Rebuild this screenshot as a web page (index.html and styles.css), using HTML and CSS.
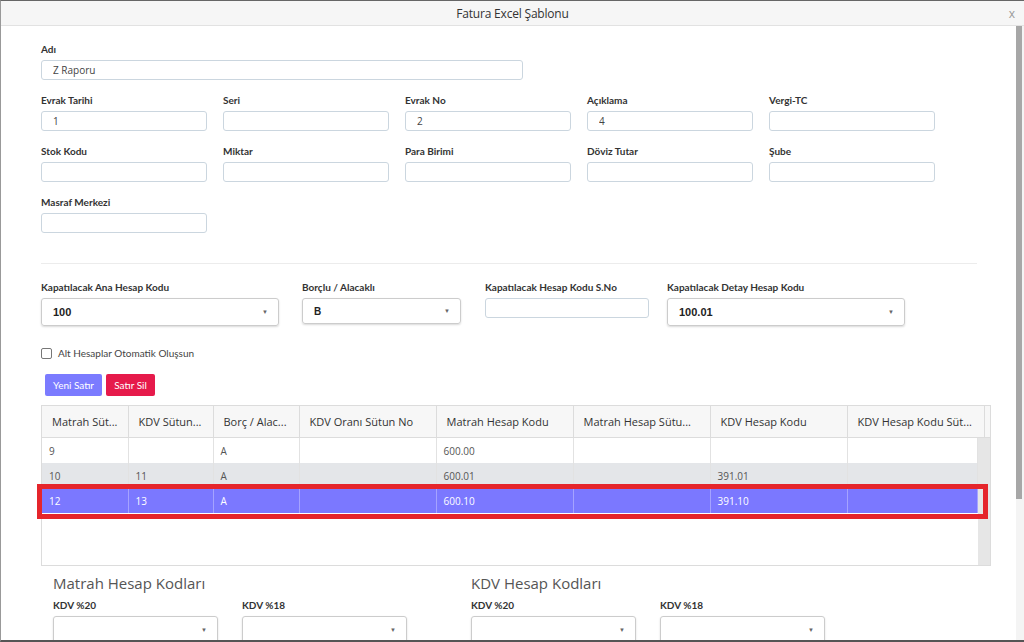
FILE: index.html
```html
<!DOCTYPE html>
<html lang="tr">
<head>
    <meta charset="UTF-8">
    <meta name="viewport" content="width=device-width, initial-scale=1.0">
    <title>Fatura Excel Şablonu</title>
    <link rel="stylesheet" href="styles.css">
</head>
<body>
    <div class="modal">
        <div class="modal-header">
            <span class="modal-title">Fatura Excel Şablonu</span>
            <span class="modal-close">x</span>
        </div>
        <div class="modal-main">
            <div class="modal-body">
                <div class="field wide">
                    <label>Adı</label>
                    <input class="text-input" type="text" value="Z Raporu">
                </div>

                <div class="form-row">
                    <div class="field"><label>Evrak Tarihi</label><input class="text-input" type="text" value="1"></div>
                    <div class="field"><label>Seri</label><input class="text-input" type="text"></div>
                    <div class="field"><label>Evrak No</label><input class="text-input" type="text" value="2"></div>
                    <div class="field"><label>Açıklama</label><input class="text-input" type="text" value="4"></div>
                    <div class="field"><label>Vergi-TC</label><input class="text-input" type="text"></div>
                </div>
                <div class="form-row">
                    <div class="field"><label>Stok Kodu</label><input class="text-input" type="text"></div>
                    <div class="field"><label>Miktar</label><input class="text-input" type="text"></div>
                    <div class="field"><label>Para Birimi</label><input class="text-input" type="text"></div>
                    <div class="field"><label>Döviz Tutar</label><input class="text-input" type="text"></div>
                    <div class="field"><label>Şube</label><input class="text-input" type="text"></div>
                </div>
                <div class="form-row">
                    <div class="field"><label>Masraf Merkezi</label><input class="text-input" type="text"></div>
                </div>

                <hr class="divider">

                <div class="account-row">
                    <div class="field select-main">
                        <label>Kapatılacak Ana Hesap Kodu</label>
                        <div class="select tall"><span>100</span><span class="caret">&#9660;</span></div>
                    </div>
                    <div class="field select-side">
                        <label>Borçlu / Alacaklı</label>
                        <div class="select"><span class="small">B</span><span class="caret">&#9660;</span></div>
                    </div>
                    <div class="field select-no">
                        <label>Kapatılacak Hesap Kodu S.No</label>
                        <input class="text-input" type="text">
                    </div>
                    <div class="field select-main">
                        <label>Kapatılacak Detay Hesap Kodu</label>
                        <div class="select tall"><span>100.01</span><span class="caret">&#9660;</span></div>
                    </div>
                </div>

                <div class="check-row">
                    <span class="checkbox"></span>
                    <span>Alt Hesaplar Otomatik Oluşsun</span>
                </div>

                <div class="buttons">
                    <button class="btn btn-new">Yeni Satır</button>
                    <button class="btn btn-delete">Satır Sil</button>
                </div>

                <div class="grid">
                    <div class="grid-head">
                        <table>
                            <colgroup>
                                <col style="width:86px"><col style="width:85px"><col style="width:86px">
                                <col style="width:137px"><col style="width:137px"><col style="width:137px">
                                <col style="width:137px"><col style="width:137px">
                            </colgroup>
                            <tr>
                                <th>Matrah Süt...</th>
                                <th>KDV Sütun...</th>
                                <th>Borç / Alac...</th>
                                <th>KDV Oranı Sütun No</th>
                                <th>Matrah Hesap Kodu</th>
                                <th>Matrah Hesap Sütu...</th>
                                <th>KDV Hesap Kodu</th>
                                <th>KDV Hesap Kodu Süt...</th>
                            </tr>
                        </table>
                    </div>
                    <div class="grid-body">
                        <table>
                            <colgroup>
                                <col style="width:86px"><col style="width:85px"><col style="width:86px">
                                <col style="width:137px"><col style="width:137px"><col style="width:137px">
                                <col style="width:137px"><col style="width:130px">
                            </colgroup>
                            <tr>
                                <td>9</td><td></td><td>A</td><td></td><td>600.00</td><td></td><td></td><td></td>
                            </tr>
                            <tr class="alt">
                                <td>10</td><td>11</td><td>A</td><td></td><td>600.01</td><td></td><td>391.01</td><td></td>
                            </tr>
                            <tr class="selected">
                                <td>12</td><td>13</td><td>A</td><td></td><td>600.10</td><td></td><td>391.10</td><td></td>
                            </tr>
                        </table>
                        <div class="grid-scroll"></div>
                    </div>
                    <div class="highlight"></div>
                </div>

                <div class="codes">
                    <div class="code-group">
                        <h3>Matrah Hesap Kodları</h3>
                        <div class="code-fields">
                            <div class="field"><label>KDV %20</label><div class="select tall"><span></span><span class="caret">&#9660;</span></div></div>
                            <div class="field"><label>KDV %18</label><div class="select tall"><span></span><span class="caret">&#9660;</span></div></div>
                        </div>
                    </div>
                    <div class="code-group">
                        <h3>KDV Hesap Kodları</h3>
                        <div class="code-fields">
                            <div class="field"><label>KDV %20</label><div class="select tall"><span></span><span class="caret">&#9660;</span></div></div>
                            <div class="field"><label>KDV %18</label><div class="select tall"><span></span><span class="caret">&#9660;</span></div></div>
                        </div>
                    </div>
                </div>
            </div>
            <div class="scrollbar"><div class="thumb"></div></div>
        </div>
    </div>
</body>
</html>
```

FILE: styles.css
```css
html, body {
    margin: 0;
    padding: 0;
    height: 100%;
    overflow: hidden;
    background-color: #fff;
}
body {
    font-family: "Open Sans", sans-serif;
    color: #333;
}
.modal {
    height: 642px;
    box-sizing: border-box;
    border-top: 1px solid #666;
    border-left: 1px solid #999;
    border-bottom: 2px solid #555;
    display: flex;
    flex-direction: column;
    overflow: hidden;
}
.modal-header {
    height: 24px;
    flex-shrink: 0;
    background-color: #f6f6f6;
    border-bottom: 1px solid #e2e2e2;
    display: flex;
    align-items: center;
    justify-content: center;
    position: relative;
}
.modal-title {
    font-size: 12px;
    color: #333;
    letter-spacing: -0.2px;
}
.modal-close {
    position: absolute;
    right: 9px;
    top: 4px;
    font-size: 12px;
    color: #999;
}
.modal-main {
    flex: 1;
    display: flex;
    min-height: 0;
}
.modal-body {
    flex: 1;
    padding: 17px 39px 0 40px;
    overflow: hidden;
}
.scrollbar {
    width: 8px;
    background-color: #f4f4f4;
}
.thumb {
    width: 6px;
    height: 473px;
    background-color: #a7a7a7;
}

/* form fields */
.field {
    display: flex;
    flex-direction: column;
}
.field label {
    font-family: Lato, sans-serif;
    font-weight: bold;
    font-size: 10px;
    line-height: 12px;
    color: #333;
    margin-bottom: 5px;
}
.field.wide {
    width: 482px;
    margin-bottom: 14px;
}
.text-input {
    height: 20px;
    box-sizing: border-box;
    border: 1px solid #cbd6df;
    border-radius: 3px;
    padding: 0 11px;
    font-family: "Open Sans", sans-serif;
    font-size: 10px;
    color: #444;
    outline: none;
}
.form-row {
    display: grid;
    grid-template-columns: repeat(5, 166px);
    column-gap: 16px;
    margin-bottom: 14px;
}
.divider {
    border: none;
    border-top: 1px solid #ececec;
    margin: 30px 0 17px;
    width: 936px;
}
.account-row {
    display: flex;
    align-items: flex-start;
}
.select-main { width: 238px; }
.select-side { width: 159px; margin-left: 23px; margin-right: 24px; }
.select-no { width: 164px; margin-right: 18px; }
.select {
    height: 26px;
    box-sizing: border-box;
    border: 1px solid #ccc;
    border-radius: 3px;
    box-shadow: 0 1px 2px rgba(0, 0, 0, 0.15);
    display: flex;
    align-items: center;
    justify-content: space-between;
    padding: 0 10px 0 11px;
    font-family: "Liberation Sans", Arial, sans-serif;
    font-weight: bold;
    font-size: 11px;
    color: #222;
}
.select.tall { height: 28px; }
.select .small { font-size: 10px; }
.caret {
    font-size: 6px;
    color: #666;
}
.check-row {
    display: flex;
    align-items: center;
    gap: 6px;
    margin-top: 21px;
    font-family: Lato, sans-serif;
    font-size: 10px;
    color: #444;
}
.checkbox {
    width: 9px;
    height: 9px;
    border: 1px solid #777;
    border-radius: 2px;
    background-color: #fff;
}
.buttons {
    display: flex;
    gap: 4px;
    margin: 15px 0 9px 4px;
}
.btn {
    height: 22px;
    border: none;
    border-radius: 2px;
    color: #fff;
    font-family: Lato, sans-serif;
    font-size: 10px;
    padding: 0 7px;
}
.btn-new { background-color: #7b7bff; width: 57px; }
.btn-delete { background-color: #e61a4b; width: 49px; }

/* grid */
.grid {
    position: relative;
    width: 948px;
    border: 1px solid #dcdcdc;
}
.grid table {
    border-collapse: collapse;
    table-layout: fixed;
}
.grid-head {
    background-color: #f7f7f7;
    border-bottom: 1px solid #dcdcdc;
}
.grid-head table { width: 942px; }
.grid-head th {
    height: 31px;
    padding: 0 0 0 10px;
    text-align: left;
    font-weight: normal;
    font-size: 11px;
    color: #333;
    border-right: 1px solid #dcdcdc;
    white-space: nowrap;
    overflow: hidden;
}
.grid-body {
    display: flex;
    height: 127px;
}
.grid-body table {
    width: 935px;
    align-self: flex-start;
}
.grid-body td {
    height: 25px;
    box-sizing: border-box;
    padding: 0 0 0 7px;
    font-size: 10px;
    color: #555;
    border-right: 1px solid #e2e2e2;
}
.grid-body tr.alt td {
    background-color: #e4e6e9;
}
.grid-body tr.selected td {
    background-color: #7b78ff;
    color: #fff;
    border-right-color: #a5a3ff;
}
.grid-scroll {
    width: 13px;
    background-color: #e6e6e6;
}
.highlight {
    position: absolute;
    left: -5px;
    top: 78px;
    width: 941px;
    height: 25px;
    border: 5px solid #e5252b;
}

/* bottom account codes */
.codes {
    display: flex;
    padding: 7px 0 0 12px;
}
.code-group {
    width: 418px;
}
.code-group h3 {
    margin: 0 0 6px;
    font-weight: normal;
    font-size: 15px;
    color: #555;
}
.code-fields {
    display: flex;
    gap: 24px;
}
.code-fields .field {
    width: 165px;
}
```
